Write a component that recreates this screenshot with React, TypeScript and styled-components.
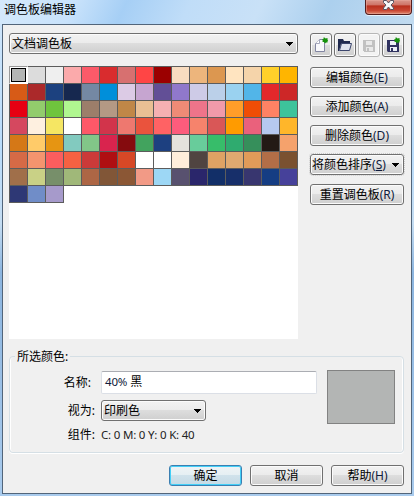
import React from 'react';
import styled, { createGlobalStyle, css } from 'styled-components';

const Global = createGlobalStyle`
  * { box-sizing: border-box; }
  body { margin: 0; overflow: hidden; }
  button, input { font: inherit; color: inherit; margin: 0; }
`;

const Window = styled.div`
  width: 414px;
  height: 496px;
  padding: 0 2px 2px;
  display: flex;
  flex-direction: column;
  color: #000;
  font: 12px/16px 'Noto Sans', 'Noto Sans CJK SC', sans-serif;
  background:
    linear-gradient(115deg, #d5e9fb 0, #c8e2fb 18%, #a6cff5 30%, #c0ddf8 45%, #c9e1f7 62%, #acd0ee 78%, #c2dbf0 100%) top / 100% 24px no-repeat,
    linear-gradient(#d2e7fb, #b9dcfb 30%, #c5ddf2 45%, #8cb5df 55%, #a9cbed 100%);
`;

const TitleBar = styled.header`
  height: 24px;
  flex: none;
  display: flex;
  justify-content: space-between;
  padding: 1px 0 0 2px;
  line-height: 18px;
`;

const CloseButton = styled.button`
  width: 47px;
  height: 15px;
  margin-top: -1px;
  padding: 0;
  display: flex;
  justify-content: center;
  border: 1px solid #541c1b;
  border-top: 0;
  border-radius: 0 0 4px 4px;
  background: linear-gradient(#d9978c 0, #cf7468 35%, #b82f1d 42%, #c94633 75%, #e08a70);
  box-shadow: inset 0 0 0 1px #e9a99d88, 0 1px 0 #e5f2fc;
`;

const Dialog = styled.main`
  flex: 1;
  display: flex;
  flex-direction: column;
  border: 1px solid #52657a;
  background: #f0f0f0;
  padding: 8px 6px 6px;
`;

const Upper = styled.section`
  display: flex;
  gap: 12px;
`;

const LeftColumn = styled.div`
  width: 289px;
`;

const RightColumn = styled.div`
  width: 94px;
`;

const raised = css`
  border: 1px solid #707070;
  border-radius: 3px;
  background: linear-gradient(#f2f2f2, #ebebeb 48%, #dddddd 50%, #cfcfcf);
  box-shadow: inset 0 0 0 1px #fbfbfb;
`;

const Combo = styled.button<{ $width: number }>`
  ${raised}
  width: ${(p) => p.$width}px;
  height: 21px;
  padding: 0 3px 0 2px;
  display: flex;
  align-items: center;
  justify-content: space-between;
`;

const Palette = styled.div`
  width: 289px;
  height: 273px;
  margin-top: 12px;
  background: #fff;
  display: grid;
  grid-template-columns: repeat(16, 18px);
  grid-auto-rows: 17px;
  align-content: start;
`;

const Swatch = styled.div<{ $color: string; $selected: boolean }>`
  width: 19px;
  height: 18px;
  border: 1px solid #5c5c5c;
  background: ${(p) => p.$color};
  ${(p) =>
    p.$selected &&
    css`
      position: relative;
      z-index: 1;
      border-color: #999 #fff #fff #999;
      box-shadow: inset 0 0 0 1px #fff, inset 0 0 0 2px #000;
    `}
`;

const Toolbar = styled.div`
  display: flex;
  gap: 2px;
`;

const ToolButton = styled.button<{ $disabled?: boolean }>`
  ${raised}
  width: 22px;
  height: 24px;
  padding: 0;
  display: grid;
  place-items: center;
  ${(p) => p.$disabled && css`border-color: #b7b7b7; background: #f3f3f3;`}
`;

const Actions = styled.div`
  margin-top: 10px;
  display: flex;
  flex-direction: column;
  gap: 8px;
  & > :last-child { margin-top: 1px; }
`;

const PushButton = styled.button<{ $width: number; $primary?: boolean; $focused?: boolean }>`
  ${raised}
  width: ${(p) => p.$width}px;
  height: 21px;
  padding: 0;
  display: flex;
  align-items: center;
  justify-content: center;
  white-space: nowrap;
  ${(p) =>
    p.$primary &&
    css`
      border-color: #3c7fb1;
      background: linear-gradient(#eff4f6, #e5eff3 48%, #d0e2eb 50%, #c5dae5);
      box-shadow: inset 0 0 0 1px #43cff7;
    `}
  ${(p) =>
    p.$focused &&
    css`
      outline: 1px dotted #cdcdcd;
      justify-content: space-between;
      padding: 0 3px 0 1px;
    `}
`;

const Latin = styled.span<{ $color?: string; $size?: number }>`
  font: ${(p) => p.$size ?? 12}px/16px 'Noto Sans', sans-serif;
  letter-spacing: ${(p) => (p.$size ? -0.2 : 0)}px;
  color: ${(p) => p.$color ?? '#101c3c'};
`;

const Group = styled.fieldset`
  width: 395px;
  height: 105px;
  margin: 9px 0 0;
  padding: 0 8px 0 0;
  border: 1px solid #d5dfe5;
  border-radius: 4px;
  box-shadow: inset 1px 0 0 #fff, inset -1px 0 0 #fff, 0 1px 0 #fff;
  display: flex;
  justify-content: space-between;
`;

const Legend = styled.legend`
  margin-left: 5px;
  padding: 0 2px;
  height: 17px;
  line-height: 17px;
`;

const Fields = styled.div`
  display: flex;
  flex-direction: column;
  padding-top: 6px;
`;

const Field = styled.label<{ $height: number; $gap: number; $label: number }>`
  height: ${(p) => p.$height}px;
  margin-bottom: ${(p) => p.$gap}px;
  display: grid;
  grid-template-columns: ${(p) => p.$label}px auto;
  column-gap: ${(p) => 91 - p.$label}px;
  align-items: center;
  & > :first-child { text-align: right; }
`;

const NameBox = styled.div`
  width: 216px;
  height: 23px;
  padding: 0 3px 2px;
  display: flex;
  align-items: center;
  gap: 3px;
  background: #fff;
  border: 1px solid #dbdfe6;
  border-top-color: #abadb3;
  border-radius: 2px;
`;

const Preview = styled.div`
  width: 68px;
  height: 54px;
  margin-top: 5px;
  background: #b3b5b4;
  border: 1px solid #828282;
`;

const Footer = styled.footer`
  margin-top: 12px;
  display: flex;
  justify-content: flex-end;
  padding-right: 1px;
  gap: 8px;
`;

const colors = `
b3b5b4 dcdcdc efefef fbaaab fc5a69 d92c2e d77070 ff4545 9b0000 f8dcc0 edb57c dc9750 ffe4c0 f5d4aa ffd02a ffb500
d75b17 ab292a 1c417f 16284f 7488a3 008fda dccbe5 c6a5d0 624f96 9078cb cecbe7 bbd0e9 9ad2f0 52b5e8 e3282b cd2727
e60012 92cc6c 6fc43d b0f790 9c7e6a b49984 c08747 e9bf94 f5b0b2 ef8b76 ee748a f19aaa ff9d29 ef4d06 ff8264 3dc39b
d5485f fef0e0 f5e663 ffffff fe5868 d2344b ee786f ea533d ff6264 fd5c7c f6836c d95757 ff9b00 ea617c b6c9ef ffb62a
d57817 ffcb69 e69512 82cabf 82c688 d9244e 850b0e 42a35e 1d4080 e5e2dc 68cc9b 37bd6a 2fab6f 368f5b 231a15 f5a26c
d66a46 f4946e fb5d5e f56142 cb3a39 af0f12 d74826 ffffff ffffff ffeedb 504441 dea264 dfa970 e19b59 b26e47 7a5130
a06f4a c9d186 778f6a a0b879 ad6645 815637 8b5735 f29a86 9dd7f5 58516f 2a266b 122f68 172f6a 38366f 153d83 46419a
2e3875 708dc8 a69acb`.trim().split(/\s+/).map((c) => `#${c}`);

const Arrow = () => (
  <svg width="8" height="4" viewBox="0 0 8 4" shapeRendering="crispEdges">
    <path d="M0 0h7v1H6v1H5v1H4v1H3V3H2V2H1V1H0z" />
  </svg>
);

const Spark = () => (
  <path d="M10.5 0.5h1l1 1 2-.5v1.500l.5 1-.5 1v1l-1.500-.1-1 1.100-1-1.500H9.500l.2-1.500-.7-1 1.500-.5z" fill="#16920b" />
);

const NewIcon = () => (
  <svg width="16" height="16" viewBox="0 0 16 16">
    <path d="M2.500 14.500v-8l4-4h5v12z" fill="#f8f8fb" stroke="#8286a2" />
    <path d="M2.500 6.500h4v-4" fill="#fff" stroke="#a4a7bb" />
    <Spark />
  </svg>
);

const OpenIcon = () => (
  <svg width="16" height="16" viewBox="0 0 16 16">
    <path d="M1 2h5l1 2h6v3H4L2 14H1z" fill="#20294e" />
    <path d="M4.500 6.500h10l-2 7h-10z" fill="#e0e3ee" stroke="#3b456c" />
  </svg>
);

const Disk = ({ body, label }: { body: string; label: string }) => (
  <>
    <path d="M2 3h12v12H3l-1-1z" fill={body} />
    <path d="M5 4h6v4H5zM5 10h7v4H5z" fill={label} />
    <path d="M6 11h2v3H6z" fill={body} />
  </>
);

const SaveIcon = () => (
  <svg width="16" height="16" viewBox="0 0 16 16" shapeRendering="crispEdges">
    <Disk body="#c1c1c1" label="#e9e9e9" />
  </svg>
);

const SaveAsIcon = () => (
  <svg width="16" height="16" viewBox="0 0 16 16">
    <Disk body="#303260" label="#edf0f8" />
    <Spark />
  </svg>
);

const CloseIcon = () => (
  <svg width="13" height="11" viewBox="0 0 13 11">
    <path d="M1.500.5h3l2 2.500 2-2.500h3v2L9 5l2.500 3v1.500h-3l-2-2.500-2 2.500h-3V8L4 5 1.500 2.500z" fill="#f8f8f8" stroke="#585462" />
  </svg>
);

export default function App() {
  return (
    <>
      <Global />
      <Window>
        <TitleBar>
          <span>调色板编辑器</span>
          <CloseButton aria-label="关闭"><CloseIcon /></CloseButton>
        </TitleBar>
        <Dialog>
          <Upper>
            <LeftColumn>
              <Combo $width={289}>文档调色板<Arrow /></Combo>
              <Palette>
                {colors.map((color, i) => (
                  <Swatch key={i} $color={color} $selected={i === 0} />
                ))}
              </Palette>
            </LeftColumn>
            <RightColumn>
              <Toolbar>
                <ToolButton><NewIcon /></ToolButton>
                <ToolButton><OpenIcon /></ToolButton>
                <ToolButton $disabled><SaveIcon /></ToolButton>
                <ToolButton><SaveAsIcon /></ToolButton>
              </Toolbar>
              <Actions>
                <PushButton $width={94}>编辑颜色<Latin>(E)</Latin></PushButton>
                <PushButton $width={94}>添加颜色<Latin>(A)</Latin></PushButton>
                <PushButton $width={94}>删除颜色<Latin>(D)</Latin></PushButton>
                <PushButton $width={94} $focused>
                  <span>将颜色排序<Latin>(<u>S</u>)</Latin></span><Arrow />
                </PushButton>
                <PushButton $width={94}>重置调色板<Latin>(R)</Latin></PushButton>
              </Actions>
            </RightColumn>
          </Upper>
          <Group>
            <Legend>所选颜色:</Legend>
            <Fields>
              <Field $height={23} $gap={6} $label={81}>
                <span>名称:</span>
                <NameBox><Latin $size={11.5}>40%</Latin><span>黑</span></NameBox>
              </Field>
              <Field $height={21} $gap={5} $label={85}>
                <span>视为:</span>
                <Combo $width={105}>印刷色<Arrow /></Combo>
              </Field>
              <Field $height={18} $gap={0} $label={85}>
                <span>组件:</span>
                <Latin $color="#222" $size={11.5}>C: 0 M: 0 Y: 0 K: 40</Latin>
              </Field>
            </Fields>
            <Preview />
          </Group>
          <Footer>
            <PushButton $width={73} $primary>确定</PushButton>
            <PushButton $width={73}>取消</PushButton>
            <PushButton $width={73}>帮助<Latin>(H)</Latin></PushButton>
          </Footer>
        </Dialog>
      </Window>
    </>
  );
}
